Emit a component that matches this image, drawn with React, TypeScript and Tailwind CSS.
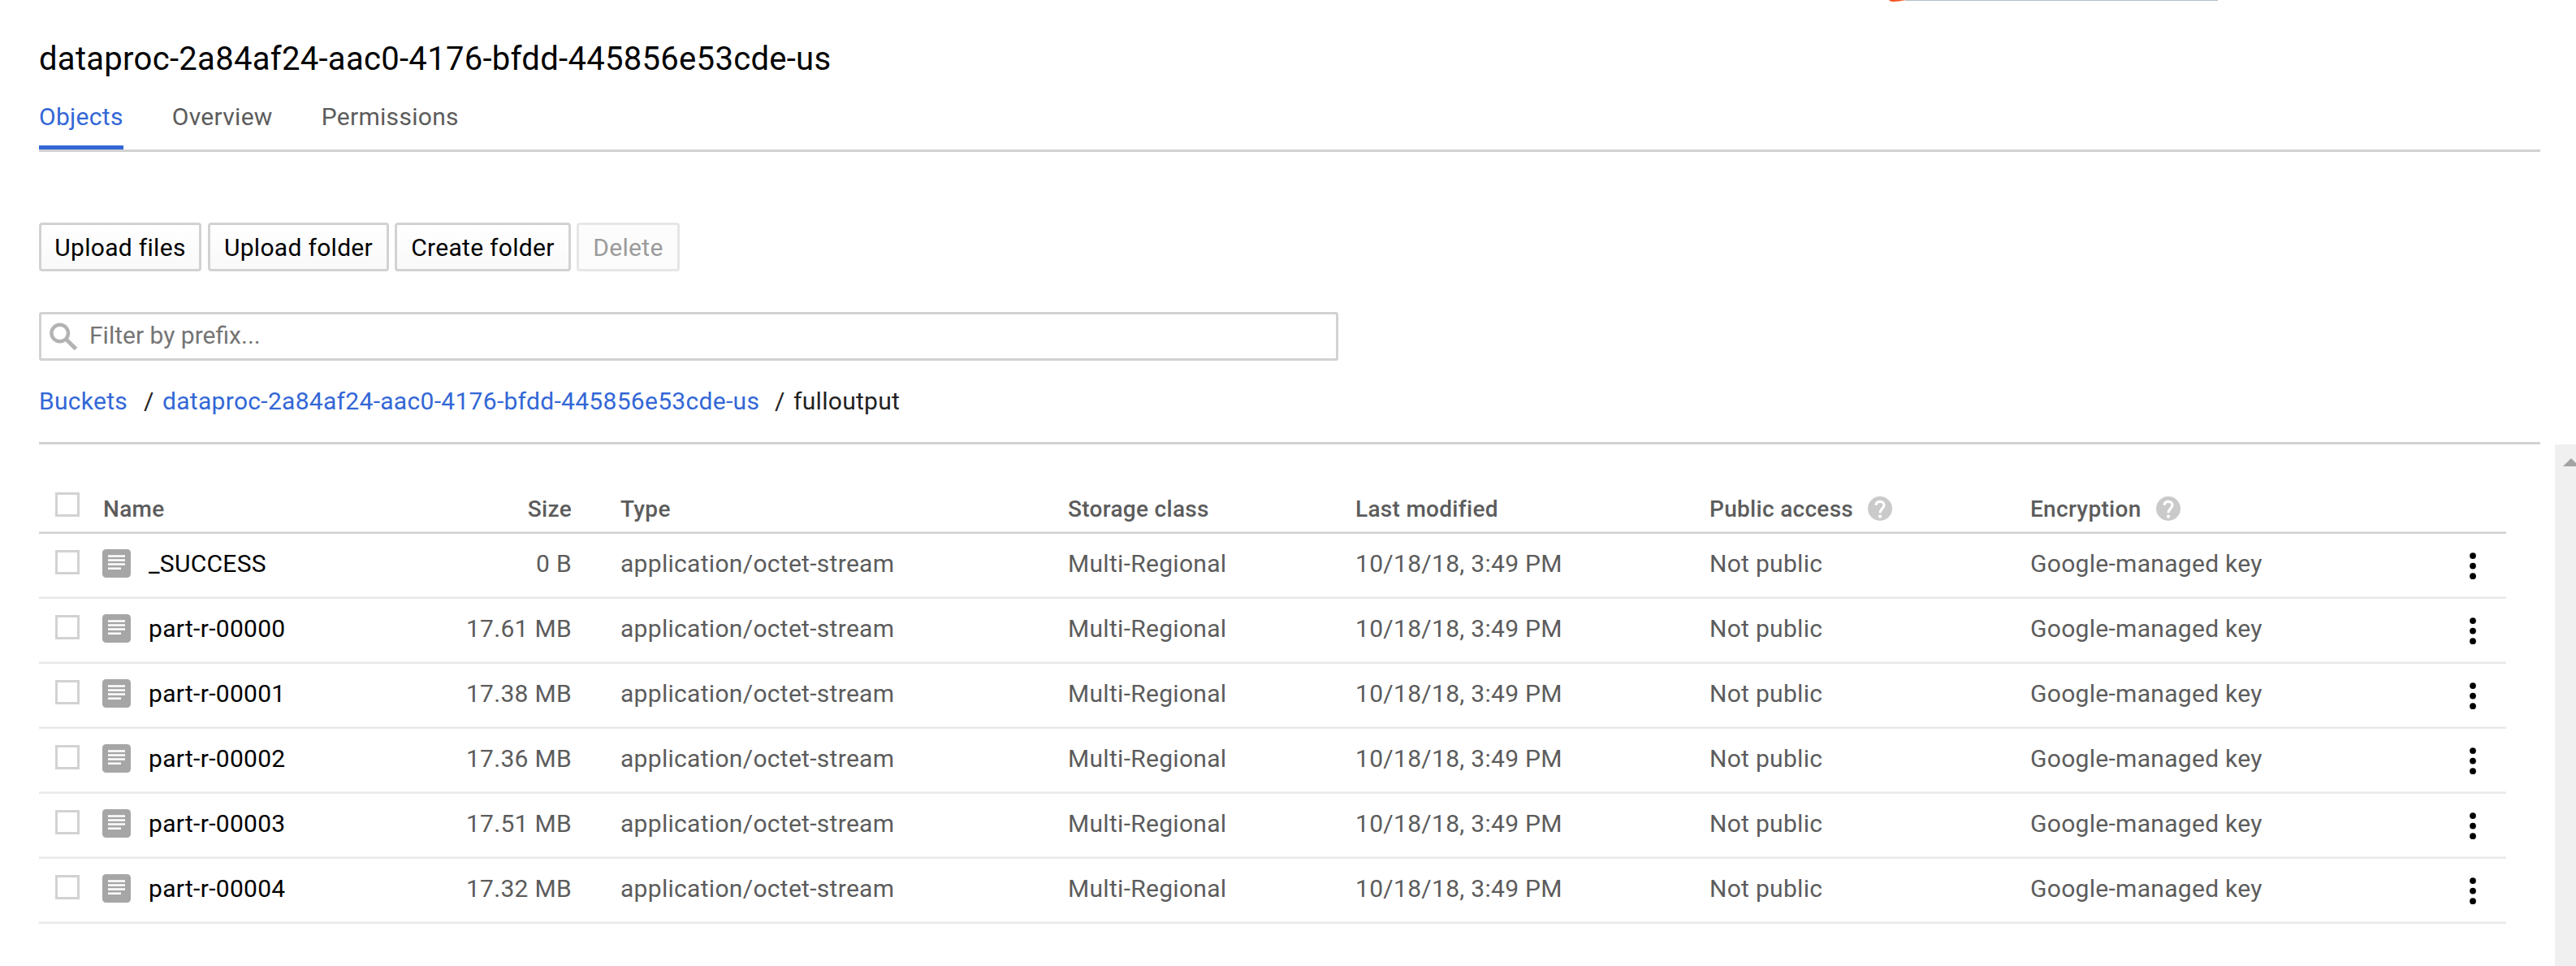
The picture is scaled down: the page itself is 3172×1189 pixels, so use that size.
import React from "react";

const files = [
  { name: "_SUCCESS", size: "0 B" },
  { name: "part-r-00000", size: "17.61 MB" },
  { name: "part-r-00001", size: "17.38 MB" },
  { name: "part-r-00002", size: "17.36 MB" },
  { name: "part-r-00003", size: "17.51 MB" },
  { name: "part-r-00004", size: "17.32 MB" },
];

const columns =
  "grid grid-cols-[78px_578px_60px_551px_354px_436px_395px_auto]";

function Checkbox() {
  return <span className="block size-[30px] shrink-0 border-3 border-[#d2d2d2] bg-white" />;
}

function FileIcon() {
  return (
    <svg className="size-[35px] shrink-0" viewBox="0 0 35 35">
      <rect width="35" height="35" rx="4.5" fill="#a6a6a6" />
      <path d="M7 8.5h21M7 13.5h21M7 18.5h21M7 23.8h16" stroke="#fff" strokeWidth="2.4" />
    </svg>
  );
}

function HelpIcon() {
  return (
    <svg className="mt-[5px] size-[30px] shrink-0" viewBox="0 0 30 30" fill="none">
      <circle cx="15" cy="15" r="15" fill="#cacaca" />
      <path
        d="M10 10.800C10.300 8 12.200 6.400 15 6.400C17.900 6.400 20 8.200 20 10.800C20 14.800 15.200 15 15 20.300"
        stroke="#fff"
        strokeWidth="3.200"
      />
      <circle cx="15" cy="24.700" r="2.100" fill="#fff" />
    </svg>
  );
}

function Menu() {
  return (
    <svg className="mt-[6px] block h-[34px] w-[8px]" viewBox="0 0 8 34">
      <circle cx="4" cy="4.100" r="3.900" />
      <circle cx="4" cy="16.600" r="3.900" />
      <circle cx="4" cy="29.200" r="3.900" />
    </svg>
  );
}

function Button({ children, className }: { children: string; className: string }) {
  return (
    <button
      className={
        "h-[60px] rounded-[4px] border-3 bg-linear-to-b pt-[2px] text-center tracking-[0.3px] whitespace-nowrap " + className
      }
    >
      {children}
    </button>
  );
}

export default function App() {
  return (
    <div className="h-[1189px] w-[3172px] overflow-hidden bg-white pl-[48px] font-[Roboto,sans-serif] text-[30px] leading-[40px] tracking-[0.3px] text-[#5c5c5c]">
      <svg className="absolute top-0 left-[2320px] h-[4px] w-[412px]" viewBox="0 0 412 4">
        <path d="M26 0H411V1H26z" fill="#b0bec9" />
        <path d="M6 0H27C21 1 15 2 11 2C8 2 7 1 6 0z" fill="#f4511e" />
      </svg>
      <h1 className="pt-[49px] text-[40px] leading-[48px] text-black">
        dataproc-2a84af24-aac0-4176-bfdd-445856e53cde-us
      </h1>
      <nav className="mt-[26px] flex h-[64px] w-[3080px] gap-[60px] border-b-3 border-[#d2d2d2]">
        <a className="h-[61px] border-b-5 border-[#3367d6] pt-[1px] text-[#3367d6]">Objects</a>
        <a className="pt-[1px]">Overview</a>
        <a className="pt-[1px]">Permissions</a>
      </nav>
      <div className="mt-[87px] flex">
        <Button className="w-[200px] border-[#d2d2d2] from-white to-[#f9f9f9] text-black">Upload files</Button>
        <Button className="ml-[8px] w-[223px] border-[#d2d2d2] from-white to-[#f9f9f9] text-black">Upload folder</Button>
        <Button className="ml-[7px] w-[217px] border-[#d2d2d2] from-white to-[#f9f9f9] text-black">Create folder</Button>
        <Button className="ml-[7px] w-[127px] border-[#e6e6e6] from-[#fcfcfc] to-[#fcfcfc] text-[#9b9b9b]">Delete</Button>
      </div>
      <div className="mt-[50px] flex h-[60px] w-[1600px] items-center rounded-[3px] border-3 border-[#d2d2d2] pl-[10px] tracking-normal text-[#757575]">
        <svg className="size-[35px]" viewBox="0 0 35 35" fill="none" stroke="#b3b3b3">
          <circle cx="12.700" cy="13" r="10.300" strokeWidth="4.400" />
          <path d="M19.500 19.800L32.500 32.500" strokeWidth="5" />
        </svg>
        <span className="ml-[14px] pb-[2px]">Filter by prefix...</span>
      </div>
      <div className="mt-[29px] flex h-[74px] w-[3080px] border-b-3 border-[#d2d2d2] pt-[1px] text-[#222]">
        <a className="w-[129px] text-[#3367d6]">Buckets</a>
        <span className="w-[23px]">/</span>
        <a className="w-[754px] text-[#3367d6]">dataproc-2a84af24-aac0-4176-bfdd-445856e53cde-us</a>
        <span className="w-[23px]">/</span>
        <span>fulloutput</span>
      </div>
      <div className="flex justify-between">
        <div className="w-[3038px] pt-[50px]">
          <div className={columns + " h-[60px] border-b-2 border-[#d0d0d0] pt-[9px] text-[28px] leading-[42px] font-medium shadow-[inset_0_-1px_0_#e8e8e8]"}>
            <div className="pl-[20px]"><Checkbox /></div>
            <div className="flex justify-between pl-[1px]"><span>Name</span><span>Size</span></div>
            <div />
            <div>Type</div>
            <div>Storage class</div>
            <div>Last modified</div>
            <div className="flex items-start gap-[18px]">Public access<HelpIcon /></div>
            <div className="flex items-start gap-[18px]">Encryption<HelpIcon /></div>
          </div>
          {files.map((f) => (
            <div key={f.name} className={columns + " h-[80px] border-b-2 border-[#e9e9e9] pt-[17px] shadow-[inset_0_-1px_0_#f3f3f3]"}>
              <div className="pt-[3px] pl-[20px]"><Checkbox /></div>
              <div className="flex justify-between">
                <span className="flex gap-[22px] text-black"><span className="pt-[2px]"><FileIcon /></span>{f.name}</span>
                <span>{f.size}</span>
              </div>
              <div />
              <div>application/octet-stream</div>
              <div>Multi-Regional</div>
              <div>10/18/18, 3:49 PM</div>
              <div>Not public</div>
              <div className="flex justify-between pr-[37px]">Google-managed key<Menu /></div>
            </div>
          ))}
        </div>
        <div className="h-[642px] w-[26px] overflow-hidden bg-[#f0f0f0] pt-[17px] pl-[10px]">
          <svg className="h-[10px] w-[20px]" viewBox="0 0 20 10"><path d="M10 0L20 10H0z" fill="#a3a3a3" /></svg>
        </div>
      </div>
    </div>
  );
}
